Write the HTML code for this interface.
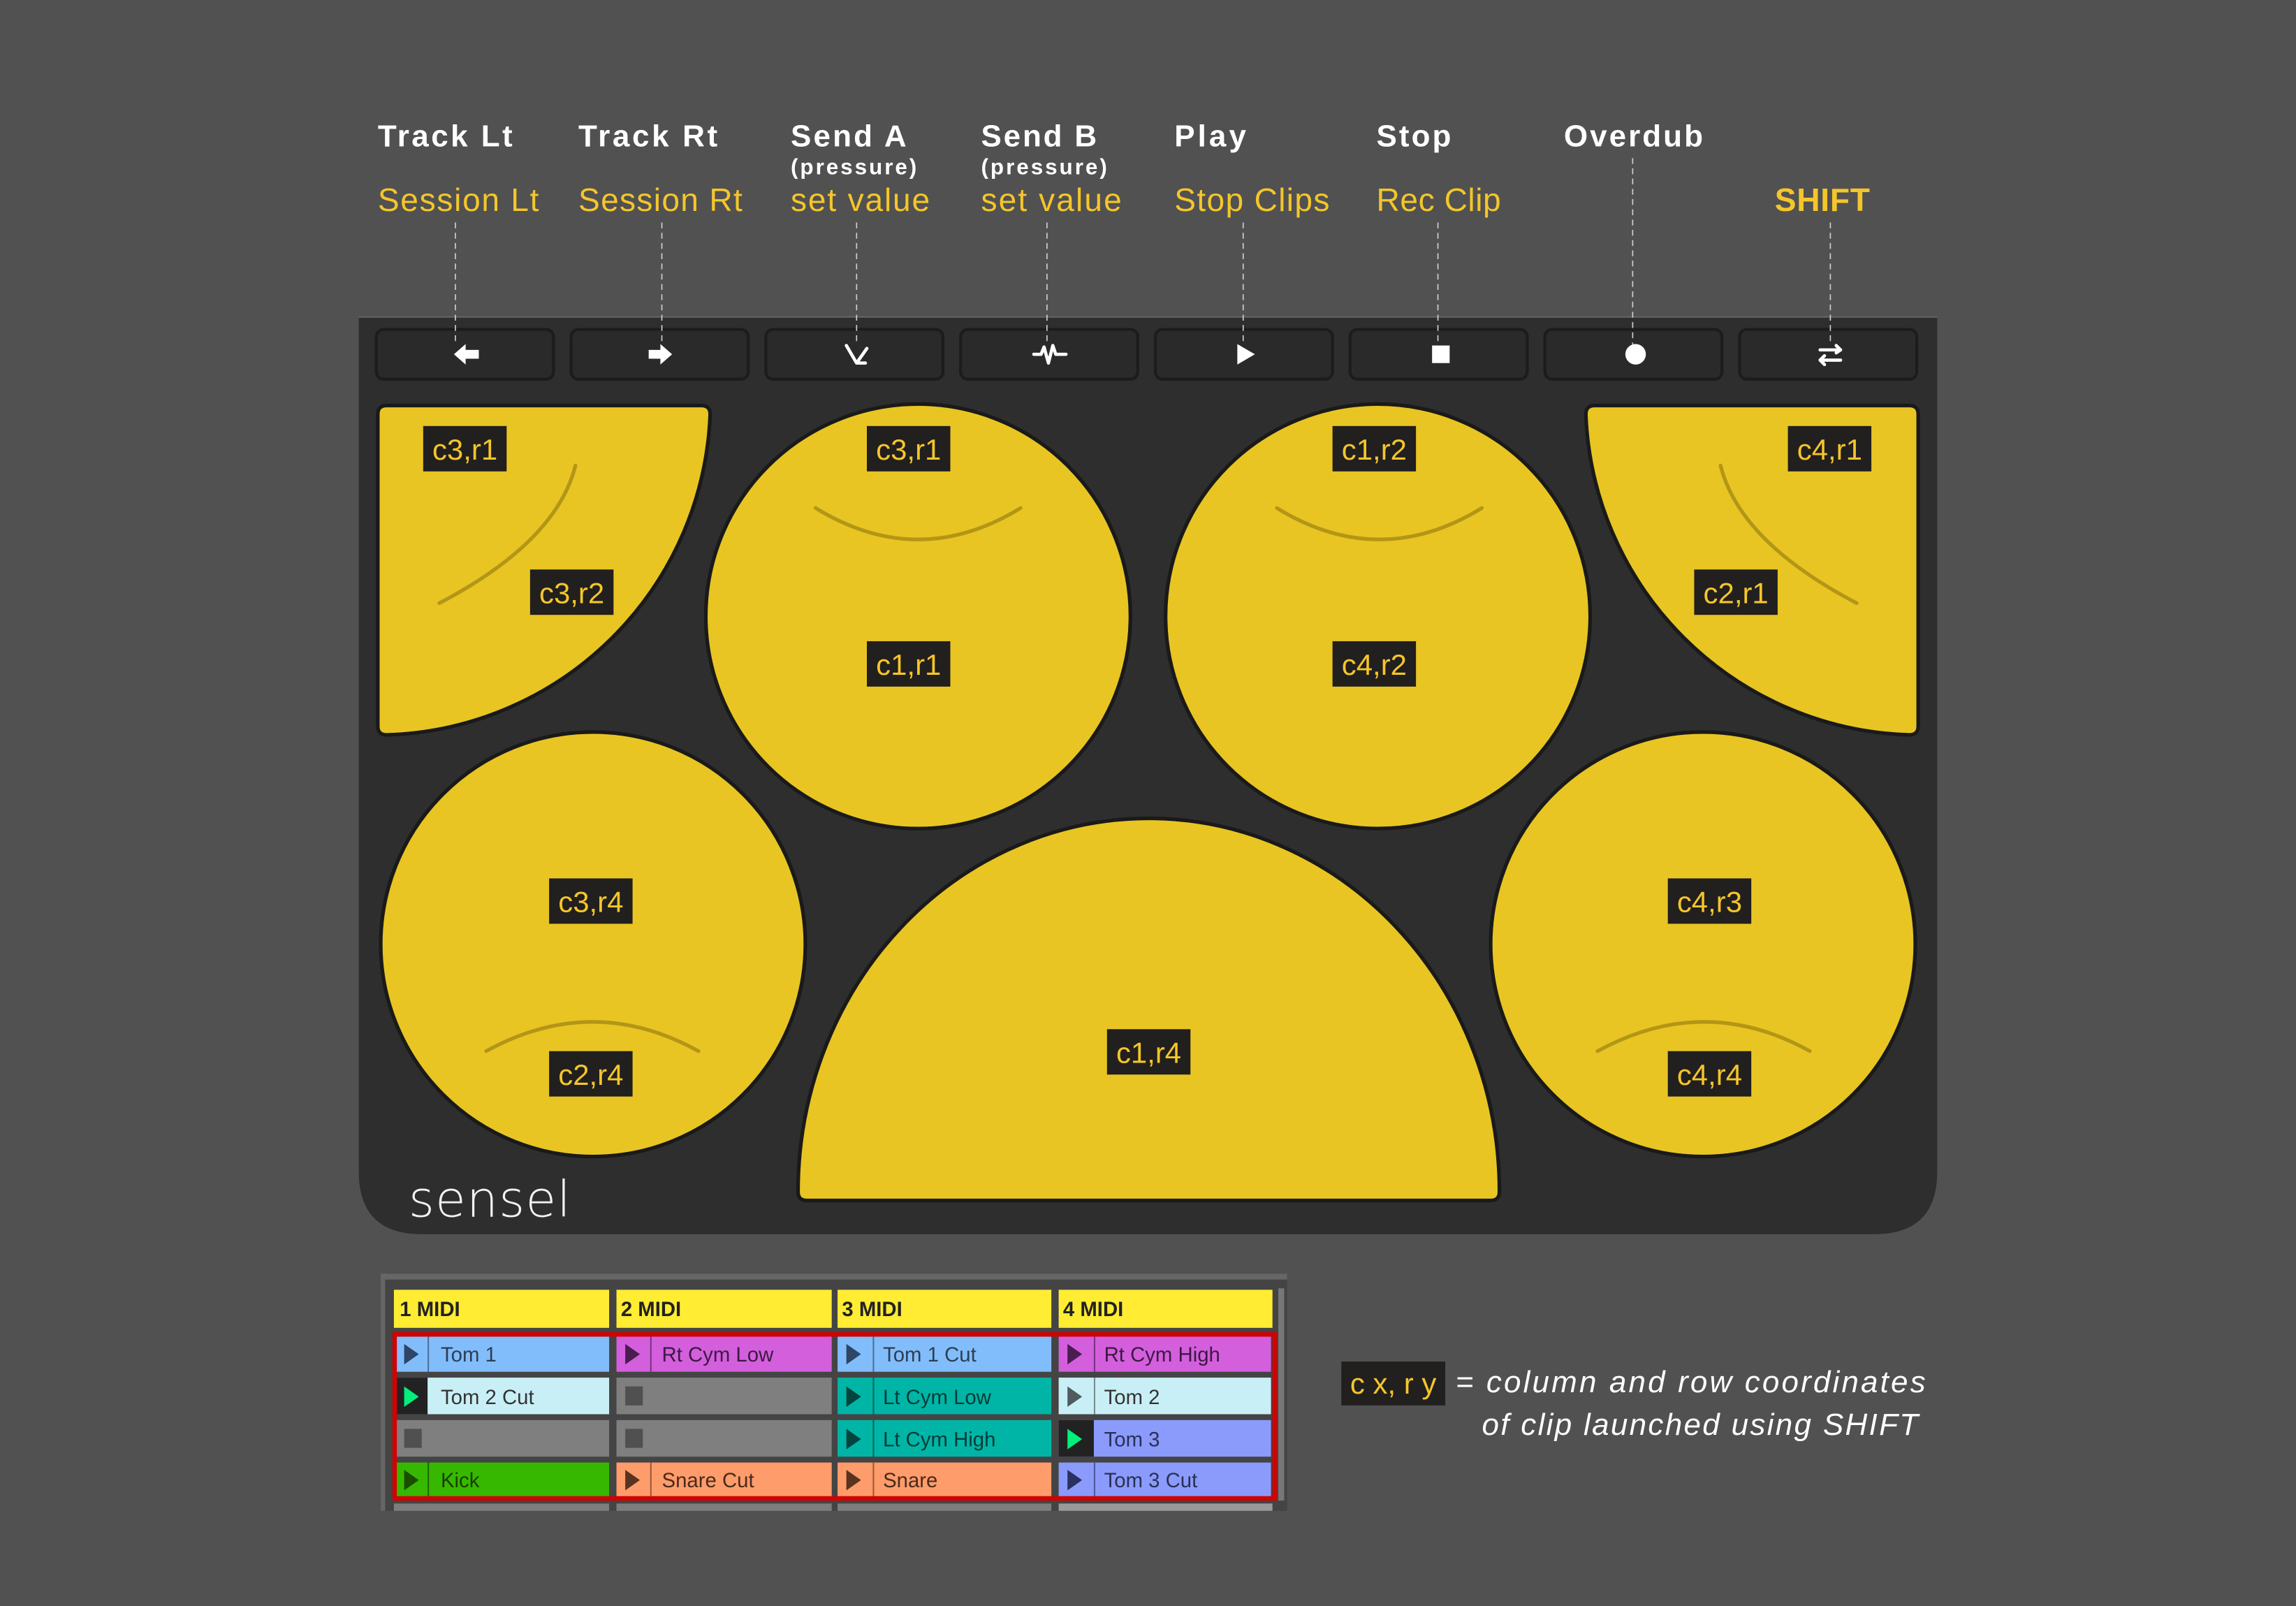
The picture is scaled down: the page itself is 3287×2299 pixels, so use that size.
<!DOCTYPE html>
<html><head><meta charset="utf-8"><style>
html,body{margin:0;padding:0;background:#515151;overflow:hidden}
svg{display:block}
</style></head><body>
<svg width="3287" height="2299" viewBox="0 0 1568 1097" preserveAspectRatio="none" xmlns="http://www.w3.org/2000/svg" font-family="Liberation Sans, sans-serif">
<rect width="1568" height="1097" fill="#515151"/>
<g fill="#ffffff" font-weight="bold" font-size="21" lengthAdjust="spacingAndGlyphs">
<text x="258" y="100" textLength="92">Track Lt</text>
<text x="395" y="100" textLength="95">Track Rt</text>
<text x="540" y="100" textLength="79">Send A</text>
<text x="670" y="100" textLength="79">Send B</text>
<text x="802" y="100" textLength="49">Play</text>
<text x="940" y="100" textLength="51">Stop</text>
<text x="1068" y="100" textLength="95">Overdub</text>
</g>
<g fill="#ffffff" font-weight="bold" font-size="15">
<text x="540" y="119" textLength="86">(pressure)</text>
<text x="670" y="119" textLength="86">(pressure)</text>
</g>
<g fill="#f4c62a" font-size="22">
<text x="258" y="144" textLength="110">Session Lt</text>
<text x="395" y="144" textLength="112">Session Rt</text>
<text x="540" y="144" textLength="95">set value</text>
<text x="670" y="144" textLength="96">set value</text>
<text x="802" y="144" textLength="106">Stop Clips</text>
<text x="940" y="144" textLength="85">Rec Clip</text>
<text x="1212" y="144" font-weight="bold" textLength="65">SHIFT</text>
</g>
<path d="M245,216 L1323,216 L1323,800 Q1323,843 1280,843 L288,843 Q245,843 245,800 Z" fill="#2e2e2e"/>
<line x1="245" y1="216.5" x2="1323" y2="216.5" stroke="#666" stroke-width="1"/>
<g fill="#2a2a2a" stroke="#1c1c1c" stroke-width="2">
<rect x="257" y="225" width="121" height="34" rx="5"/>
<rect x="390" y="225" width="121" height="34" rx="5"/>
<rect x="523" y="225" width="121" height="34" rx="5"/>
<rect x="656" y="225" width="121" height="34" rx="5"/>
<rect x="789" y="225" width="121" height="34" rx="5"/>
<rect x="922" y="225" width="121" height="34" rx="5"/>
<rect x="1055" y="225" width="121" height="34" rx="5"/>
<rect x="1188" y="225" width="121" height="34" rx="5"/>
</g>
<g stroke="#cfcfcf" stroke-width="0.8" stroke-dasharray="4,3">
<line x1="311" y1="152" x2="311" y2="236"/>
<line x1="452" y1="152" x2="452" y2="236"/>
<line x1="585" y1="152" x2="585" y2="236"/>
<line x1="715" y1="152" x2="715" y2="236"/>
<line x1="849" y1="152" x2="849" y2="236"/>
<line x1="982" y1="152" x2="982" y2="236"/>
<line x1="1115" y1="108" x2="1115" y2="236"/>
<line x1="1250" y1="152" x2="1250" y2="236"/>
</g>
<g fill="#fff" stroke="none">
<path d="M310,242 L318,235 L318,239 L327,239 L327,245 L318,245 L318,249 Z"/>
<path d="M459,242 L451,235 L451,239 L443,239 L443,245 L451,245 L451,249 Z"/>
<path d="M845,235 L857,242 L845,249 Z"/>
<rect x="978" y="236" width="12" height="12"/>
<circle cx="1117" cy="242" r="7"/>
</g>
<g stroke="#fff" stroke-width="2.2" fill="none" stroke-linecap="round" stroke-linejoin="round">
<path d="M578,236 L585,248 L592,238 M586,248 L591,248"/>
<path d="M706,242 L711,242 L713,237 L716,248 L719,236 L721,242 L728,242"/>
<path d="M1243,239 L1257,239 M1254,236 L1257,239 L1254,241 M1257,246 L1243,246 M1246,243 L1243,246 L1246,249"/>
</g>
<g fill="#e8c523" stroke="#1a1a1a" stroke-width="2.5">
<path d="M258,283 Q258,277 264,277 L479,277 Q485,277 485,283 A 228 228 0 0 1 264,502 Q258,502 258,496 Z"/>
<circle cx="627" cy="421" r="145"/>
<circle cx="941" cy="421" r="145"/>
<path d="M1310,283 Q1310,277 1304,277 L1089,277 Q1083,277 1083,283 A 228 228 0 0 0 1304,502 Q1310,502 1310,496 Z"/>
<circle cx="405" cy="645" r="145"/>
<circle cx="1163" cy="645" r="145"/>
<path d="M545,814 A 239.5 255 0 0 1 1024,814 Q1024,820 1018,820 L551,820 Q545,820 545,814 Z"/>
</g>
<g fill="none" stroke="#b39616" stroke-width="2.5" stroke-linecap="round">
<path d="M300,412 Q380,370 393,318"/>
<path d="M557,347 Q627,390 697,347"/>
<path d="M872,347 Q942,390 1012,347"/>
<path d="M1175,318 Q1188,370 1268,412"/>
<path d="M332,718 Q405,678 477,718"/>
<path d="M1091,718 Q1164,678 1236,718"/>
</g>
<g fill="#221f1f">
<rect x="289" y="291" width="57" height="31"/>
<rect x="362" y="389" width="57" height="31"/>
<rect x="592" y="291" width="57" height="31"/>
<rect x="592" y="438" width="57" height="31"/>
<rect x="910" y="291" width="57" height="31"/>
<rect x="910" y="438" width="57" height="31"/>
<rect x="1221" y="291" width="57" height="31"/>
<rect x="1157" y="389" width="57" height="31"/>
<rect x="375" y="600" width="57" height="31"/>
<rect x="375" y="718" width="57" height="31"/>
<rect x="756" y="703" width="57" height="31"/>
<rect x="1139" y="600" width="57" height="31"/>
<rect x="1139" y="718" width="57" height="31"/>
</g>
<g fill="#f4c62a" font-size="20" text-anchor="middle">
<text x="317.5" y="314">c3,r1</text>
<text x="390.5" y="412">c3,r2</text>
<text x="620.5" y="314">c3,r1</text>
<text x="620.5" y="461">c1,r1</text>
<text x="938.5" y="314">c1,r2</text>
<text x="938.5" y="461">c4,r2</text>
<text x="1249.5" y="314">c4,r1</text>
<text x="1185.5" y="412">c2,r1</text>
<text x="403.5" y="623">c3,r4</text>
<text x="403.5" y="741">c2,r4</text>
<text x="784.5" y="726">c1,r4</text>
<text x="1167.5" y="623">c4,r3</text>
<text x="1167.5" y="741">c4,r4</text>
</g>
<text x="279" y="831" fill="#f2f2f2" font-size="34" font-family="DejaVu Sans, sans-serif" font-weight="200" letter-spacing="0.5">sensel</text>
<rect x="260" y="870" width="619" height="162" fill="#444"/>
<rect x="260" y="870" width="619" height="4" fill="#666"/>
<rect x="260" y="870" width="3" height="162" fill="#666"/>
<rect x="873" y="880" width="4" height="145" fill="#777"/>
<g fill="#ffec33">
<rect x="269" y="881" width="147" height="26"/>
<rect x="421" y="881" width="147" height="26"/>
<rect x="572" y="881" width="146" height="26"/>
<rect x="723" y="881" width="146" height="26"/>
</g>
<g fill="#222" font-size="14" font-weight="bold">
<text x="273" y="899">1 MIDI</text>
<text x="424" y="899">2 MIDI</text>
<text x="575" y="899">3 MIDI</text>
<text x="726" y="899">4 MIDI</text>
</g>
<rect x="269" y="1027" width="147" height="5" fill="#7d7d7d"/>
<rect x="421" y="1027" width="147" height="5" fill="#7d7d7d"/>
<rect x="572" y="1027" width="146" height="5" fill="#7d7d7d"/>
<rect x="723" y="1027" width="146" height="5" fill="#9a9a9a"/>
<g font-size="14">
<rect x="271" y="913" width="145" height="24" fill="#82bdfb"/><rect x="292" y="913" width="1" height="24" fill="#4d6f96"/><path d="M276,918 L286,925 L276,932Z" fill="#2e4566"/><text x="301" y="930" fill="#2c3e55">Tom 1</text>
<rect x="421" y="913" width="147" height="24" fill="#d35fdd"/><rect x="444" y="913" width="1" height="24" fill="#7a3480"/><path d="M427,918 L437,925 L427,932Z" fill="#4a1d50"/><text x="452" y="930" fill="#3d1842">Rt Cym Low</text>
<rect x="572" y="913" width="146" height="24" fill="#82bdfb"/><rect x="596" y="913" width="1" height="24" fill="#4d6f96"/><path d="M578,918 L588,925 L578,932Z" fill="#2e4566"/><text x="603" y="930" fill="#2c3e55">Tom 1 Cut</text>
<rect x="723" y="913" width="145" height="24" fill="#d35fdd"/><rect x="747" y="913" width="1" height="24" fill="#7a3480"/><path d="M729,918 L739,925 L729,932Z" fill="#4a1d50"/><text x="754" y="930" fill="#3d1842">Rt Cym High</text>
<rect x="271" y="941" width="145" height="25" fill="#c9eff6"/><rect x="271" y="941" width="21" height="25" fill="#222"/><path d="M276,947 L286,954 L276,961Z" fill="#00f07a"/><text x="301" y="959" fill="#333">Tom 2 Cut</text>
<rect x="421" y="941" width="147" height="25" fill="#7f7f7f"/><rect x="427" y="947" width="12" height="13" fill="#505050"/>
<rect x="572" y="941" width="146" height="25" fill="#00b5a6"/><rect x="596" y="941" width="1" height="25" fill="#06655d"/><path d="M578,947 L588,954 L578,961Z" fill="#03443e"/><text x="603" y="959" fill="#053b36">Lt Cym Low</text>
<rect x="723" y="941" width="145" height="25" fill="#c9eff6"/><rect x="747" y="941" width="1" height="25" fill="#7a8d91"/><path d="M729,947 L739,954 L729,961Z" fill="#4f5b5e"/><text x="754" y="959" fill="#333">Tom 2</text>
<rect x="271" y="970" width="145" height="25" fill="#7f7f7f"/><rect x="276" y="976" width="12" height="13" fill="#505050"/>
<rect x="421" y="970" width="147" height="25" fill="#7f7f7f"/><rect x="427" y="976" width="12" height="13" fill="#505050"/>
<rect x="572" y="970" width="146" height="25" fill="#00b5a6"/><rect x="596" y="970" width="1" height="25" fill="#06655d"/><path d="M578,976 L588,983 L578,990Z" fill="#03443e"/><text x="603" y="988" fill="#053b36">Lt Cym High</text>
<rect x="723" y="970" width="145" height="25" fill="#8a9bfb"/><rect x="723" y="970" width="24" height="25" fill="#222"/><path d="M729,976 L739,983 L729,990Z" fill="#00f07a"/><text x="754" y="988" fill="#2a2f55">Tom 3</text>
<rect x="271" y="999" width="145" height="23" fill="#37b800"/><rect x="292" y="999" width="1" height="23" fill="#1e6600"/><path d="M276,1004 L286,1011 L276,1018Z" fill="#1a4d00"/><text x="301" y="1016" fill="#173f00">Kick</text>
<rect x="421" y="999" width="147" height="23" fill="#ff9c6b"/><rect x="444" y="999" width="1" height="23" fill="#9b5a3b"/><path d="M427,1004 L437,1011 L427,1018Z" fill="#5a3220"/><text x="452" y="1016" fill="#4a2a1a">Snare Cut</text>
<rect x="572" y="999" width="146" height="23" fill="#ff9c6b"/><rect x="596" y="999" width="1" height="23" fill="#9b5a3b"/><path d="M578,1004 L588,1011 L578,1018Z" fill="#5a3220"/><text x="603" y="1016" fill="#4a2a1a">Snare</text>
<rect x="723" y="999" width="145" height="23" fill="#8a9bfb"/><rect x="747" y="999" width="1" height="23" fill="#4f5a9a"/><path d="M729,1004 L739,1011 L729,1018Z" fill="#2a3060"/><text x="754" y="1016" fill="#2a2f55">Tom 3 Cut</text>
</g>
<rect x="269.5" y="911.5" width="601" height="112" fill="none" stroke="#d40000" stroke-width="3"/>
<rect x="916" y="930" width="71" height="30" fill="#221f1f"/>
<text x="951.5" y="952" fill="#f4c62a" font-size="20" text-anchor="middle">c x, r y</text>
<text x="994" y="951" fill="#fff" font-size="21" font-style="italic" textLength="321">= column and row coordinates</text>
<text x="1012" y="980" fill="#fff" font-size="21" font-style="italic" textLength="298">of clip launched using SHIFT</text>
</svg>
</body></html>
